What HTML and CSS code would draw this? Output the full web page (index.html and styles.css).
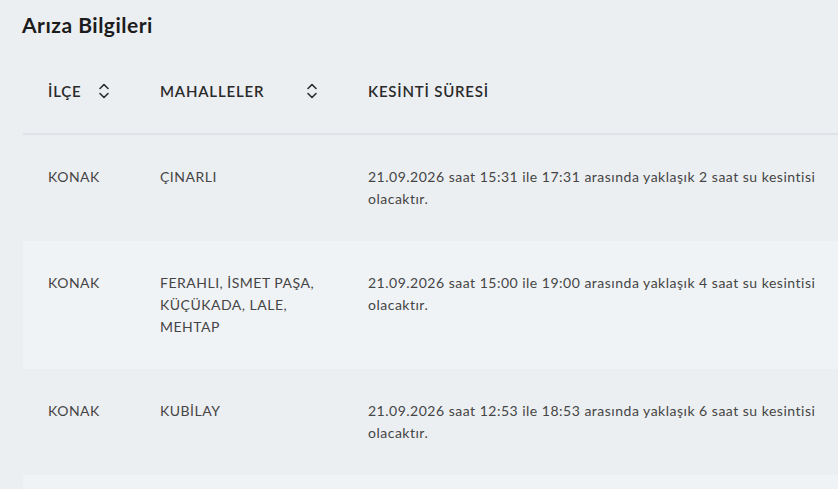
FILE: index.html
```html
<!DOCTYPE html>
<html lang="tr">
<head>
<meta charset="utf-8">
<title>Arıza Bilgileri</title>
<link rel="stylesheet" href="styles.css">
</head>
<body>
<main class="page">
  <h1 class="title">Arıza Bilgileri</h1>
  <table class="outages">
    <colgroup>
      <col class="c-ilce">
      <col class="c-mah">
      <col class="c-sure">
    </colgroup>
    <thead>
      <tr>
        <th><div class="th-inner"><span>İLÇE</span><svg class="sort" viewBox="0 0 12 18" width="12" height="18"><path d="M2 6.5 L6 2.5 L10 6.5 M2 11.5 L6 15.5 L10 11.5" fill="none" stroke="#2b2b2b" stroke-width="1.6" stroke-linecap="round" stroke-linejoin="round"/></svg></div></th>
        <th><div class="th-inner"><span>MAHALLELER</span><svg class="sort" viewBox="0 0 12 18" width="12" height="18"><path d="M2 6.5 L6 2.5 L10 6.5 M2 11.5 L6 15.5 L10 11.5" fill="none" stroke="#2b2b2b" stroke-width="1.6" stroke-linecap="round" stroke-linejoin="round"/></svg></div></th>
        <th><div class="th-inner"><span>KESİNTİ SÜRESİ</span></div></th>
      </tr>
    </thead>
    <tbody>
      <tr>
        <td>KONAK</td>
        <td>ÇINARLI</td>
        <td><div class="desc">21.09.2026 saat 15:31 ile 17:31 arasında yaklaşık 2 saat su kesintisi olacaktır.</div></td>
      </tr>
      <tr>
        <td>KONAK</td>
        <td>FERAHLI, İSMET PAŞA, KÜÇÜKADA, LALE, MEHTAP</td>
        <td><div class="desc">21.09.2026 saat 15:00 ile 19:00 arasında yaklaşık 4 saat su kesintisi olacaktır.</div></td>
      </tr>
      <tr>
        <td>KONAK</td>
        <td>KUBİLAY</td>
        <td><div class="desc">21.09.2026 saat 12:53 ile 18:53 arasında yaklaşık 6 saat su kesintisi olacaktır.</div></td>
      </tr>
      <tr class="last">
        <td></td>
        <td></td>
        <td></td>
      </tr>
    </tbody>
  </table>
</main>
</body>
</html>
```

FILE: styles.css
```css
html, body {
  margin: 0;
  padding: 0;
  background: #eceff2;
  overflow: hidden;
}
body {
  font-family: "Lato", "Noto Sans", sans-serif;
  color: #3d3d3d;
}
.page {
  padding: 12px 0 0 22px;
}
.title {
  margin: 0 0 11px 0;
  font-size: 21px;
  line-height: 26px;
  font-weight: 700;
  letter-spacing: 0.5px;
  color: #1c1c1c;
}
.outages {
  border-collapse: collapse;
  table-layout: fixed;
  width: 840px;
  margin-left: 1px;
}
.c-ilce { width: 112px; }
.c-mah { width: 208px; }
.c-sure { width: 520px; }
.outages th {
  text-align: left;
  padding: 31px 25px;
  font-size: 15px;
  line-height: 22px;
  font-weight: 600;
  letter-spacing: 0.8px;
  color: #2a2a2a;
  border-bottom: 2px solid #dfe3e7;
}
.th-inner {
  display: flex;
  align-items: center;
  justify-content: space-between;
}
.sort {
  display: block;
  flex: none;
}
.outages td {
  vertical-align: top;
  padding: 31px 25px;
  font-size: 14px;
  line-height: 22px;
  letter-spacing: 0.5px;
  color: #454545;
}
.outages tbody tr:nth-child(even) td {
  background: #f0f3f6;
}
.outages tr.last td {
  height: 60px;
}
.desc {
  max-width: 462px;
}
```
